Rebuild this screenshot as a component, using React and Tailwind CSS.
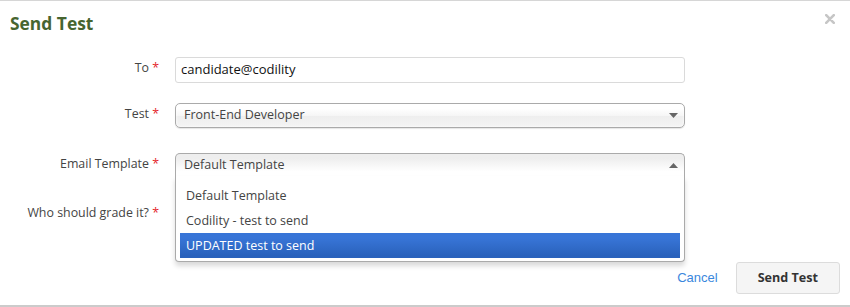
import React from "react";

const Caret = ({ up }) => (
  <svg width="9" height="5" viewBox="0 0 9 5" className="shrink-0">
    <path d={up ? "M0 5 L4.5 0 L9 5 Z" : "M0 0 L9 0 L4.5 5 Z"} fill="#666" />
  </svg>
);

const Label = ({ children }) => (
  <div className="w-[175px] shrink-0 pr-[16px] pt-[1px] text-right text-[12.4px] leading-[20px] text-[#444]">
    {children} <span className="text-[#e4252c]">*</span>
  </div>
);

const options = ["Default Template", "Codility - test to send", "UPDATED test to send"];

export default function App() {
  return (
    <div className="relative h-[307px] w-[850px] overflow-hidden border-t border-b-2 border-t-[#d6d6d6] border-b-[#cbcbcb] bg-white font-['Open_Sans',sans-serif]">
      {/* header */}
      <div className="flex items-start justify-between pl-[10px] pr-[15px] pt-[9px]">
        <h1 className="text-[17.4px] font-bold leading-[26px] text-[#476530]">Send Test</h1>
        <svg width="10" height="10" viewBox="0 0 10 10" className="mt-[4px]">
          <path d="M1.2 1.2 L8.8 8.8 M8.8 1.2 L1.2 8.8" stroke="#c6c6c6" strokeWidth="2.6" strokeLinecap="round" />
        </svg>
      </div>

      {/* form */}
      <div className="mt-[21px] flex flex-col">
        <div className="flex">
          <Label>To</Label>
          <div className="flex h-[26px] w-[510px] items-center rounded-[3px] border border-[#dadada] bg-white px-[5px] text-[13px] text-[#111]">
            candidate@codility
          </div>
        </div>

        <div className="mt-[20px] flex">
          <Label>Test</Label>
          <div className="flex h-[25px] w-[510px] items-center justify-between rounded-[5px] border border-[#aaa] bg-[linear-gradient(#fff_20%,#f6f6f6_50%,#eee_52%,#f4f4f4_100%)] pl-[8px] pr-[6px] text-[12.5px] text-[#444] shadow-[inset_0_0_3px_#fff,0_1px_1px_rgba(0,0,0,0.1)]">
            <span>Front-End Developer</span>
            <Caret />
          </div>
        </div>

        <div className="mt-[25px] flex">
          <Label>Email Template</Label>
          <div className="relative z-10 w-[510px]">
            <div className="flex h-[23px] items-center justify-between rounded-t-[5px] border border-b-0 border-[#aaa] bg-[linear-gradient(#eee_20%,#fff_80%)] pl-[8px] pr-[6px] text-[12.5px] text-[#444]">
              <span>Default Template</span>
              <Caret up />
            </div>
            <div className="absolute left-0 top-full w-full rounded-b-[4px] border border-t-0 border-[#aaa] bg-white pt-[7px] shadow-[0_4px_5px_rgba(0,0,0,0.15)]">
              <ul className="mb-[3px] mr-[4px] pl-[4px]">
                {options.map((o, i) => (
                  <li
                    key={o}
                    className={
                      i === 2
                        ? "bg-[linear-gradient(#3875d7_20%,#2a62bc_90%)] px-[6px] py-[5px] text-[12.5px] leading-[15px] text-white"
                        : "px-[6px] py-[5px] text-[12.5px] leading-[15px] text-[#444]"
                    }
                  >
                    {o}
                  </li>
                ))}
              </ul>
            </div>
          </div>
        </div>

        <div className="mt-[26px] flex">
          <Label>Who should grade it?</Label>
          <div className="h-[23px] w-[510px] rounded-[5px] border border-[#aaa]" />
        </div>
      </div>

      {/* footer */}
      <div className="mt-[37px] flex items-center justify-end gap-[18px] pr-[10px]">
        <a className="font-['Liberation_Sans',Arial,sans-serif] text-[13px] text-[#3a87dd]">Cancel</a>
        <button className="h-[32px] rounded-[3px] border border-[#dcdcdc] bg-[#f5f5f5] px-[21px] text-[12.6px] font-bold text-[#333]">
          Send Test
        </button>
      </div>
    </div>
  );
}
